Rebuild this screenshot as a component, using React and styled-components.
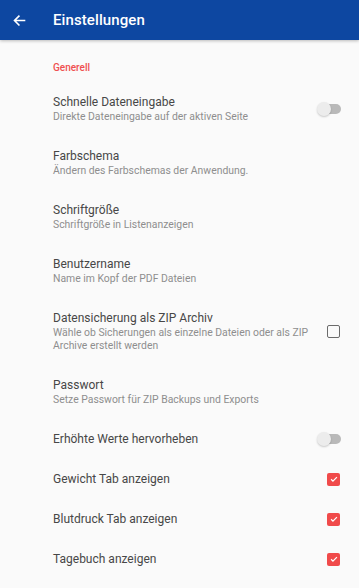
import styled, { createGlobalStyle } from 'styled-components'

const GlobalStyle = createGlobalStyle`
  html, body {
    margin: 0;
    padding: 0;
    background: #fafafa;
    font-family: Roboto, "Noto Sans", sans-serif;
  }
`

const Page = styled.div`
  width: 359px;
  min-height: 588px;
  background: #fafafa;
`

const AppBar = styled.header`
  height: 40px;
  background: #0d47a1;
  display: flex;
  align-items: center;
  box-shadow: 0 1px 3px rgba(0, 0, 0, 0.25);
  color: #fff;
`

const BackButton = styled.div`
  width: 53px;
  display: flex;
  align-items: center;
  padding-left: 12px;
  box-sizing: border-box;
  height: 100%;
`

const Title = styled.h1`
  margin: 0;
  font-size: 15px;
  font-weight: 500;
  letter-spacing: 0.1px;
`

const List = styled.div`
  padding-top: 19px;
`

const Category = styled.div`
  padding-left: 53px;
  color: #ef4f4f;
  font-size: 10px;
  font-weight: 500;
  height: 18px;
  line-height: 18px;
  margin-bottom: 5px;
`

const Row = styled.div`
  display: flex;
  align-items: center;
  padding: 0 18px 0 53px;
  min-height: ${p => (p.$tall ? '54px' : '40px')};
  box-sizing: border-box;
  ${p => p.$extra && `padding-top: ${p.$extra}px; padding-bottom: ${p.$extra}px;`}
`

const Texts = styled.div`
  flex: 1;
  display: flex;
  flex-direction: column;
  gap: 1px;
`

const ItemTitle = styled.div`
  font-size: 12px;
  color: #474747;
  line-height: 15px;
`

const ItemSub = styled.div`
  font-size: 10.4px;
  color: #8e8e8e;
  line-height: 12.5px;
`

const Control = styled.div`
  width: 26px;
  display: flex;
  justify-content: flex-end;
  align-items: center;
`

const Toggle = styled.div`
  position: relative;
  width: 24px;
  height: 14px;
  &::before {
    content: '';
    position: absolute;
    left: 4px;
    right: 0;
    top: 2px;
    height: 10px;
    border-radius: 5px;
    background: #b9b9b9;
  }
  &::after {
    content: '';
    position: absolute;
    left: 0;
    top: 0;
    width: 14px;
    height: 14px;
    border-radius: 50%;
    background: #ececec;
    box-shadow: 0 1px 2px rgba(0, 0, 0, 0.2);
  }
`

const Box = styled.div`
  width: 13px;
  height: 13px;
  box-sizing: border-box;
  border-radius: 2px;
  border: ${p => (p.$checked ? 'none' : '1.5px solid #6b6b6b')};
  background: ${p => (p.$checked ? '#f04a4a' : 'transparent')};
  display: flex;
  align-items: center;
  justify-content: center;
  margin-right: 1px;
`

const Check = ({ checked }) => (
  <Box $checked={checked}>
    {checked && (
      <svg width="10" height="10" viewBox="0 0 24 24">
        <path d="M5 12.5l4.5 4.5L19 7.5" fill="none" stroke="#fff" strokeWidth="3" />
      </svg>
    )}
  </Box>
)

const items = [
  { title: 'Schnelle Dateneingabe', sub: 'Direkte Dateneingabe auf der aktiven Seite', control: 'toggle' },
  { title: 'Farbschema', sub: 'Ändern des Farbschemas der Anwendung.' },
  { title: 'Schriftgröße', sub: 'Schriftgröße in Listenanzeigen' },
  { title: 'Benutzername', sub: 'Name im Kopf der PDF Dateien' },
  {
    title: 'Datensicherung als ZIP Archiv',
    sub: 'Wähle ob Sicherungen als einzelne Dateien oder als ZIP Archive erstellt werden',
    control: 'box',
    extra: 13,
  },
  { title: 'Passwort', sub: 'Setze Passwort für ZIP Backups und Exports' },
  { title: 'Erhöhte Werte hervorheben', control: 'toggle' },
  { title: 'Gewicht Tab anzeigen', control: 'checked' },
  { title: 'Blutdruck Tab anzeigen', control: 'checked' },
  { title: 'Tagebuch anzeigen', control: 'checked' },
]

export default function App() {
  return (
    <Page>
      <GlobalStyle />
      <AppBar>
        <BackButton>
          <svg width="15" height="15" viewBox="0 0 24 24">
            <path d="M20 12H5M11 5l-7 7 7 7" fill="none" stroke="#fff" strokeWidth="2.6" strokeLinecap="square" />
          </svg>
        </BackButton>
        <Title>Einstellungen</Title>
      </AppBar>
      <List>
        <Category>Generell</Category>
        {items.map(it => (
          <Row key={it.title} $tall={!!it.sub} $extra={it.extra}>
            <Texts>
              <ItemTitle>{it.title}</ItemTitle>
              {it.sub && <ItemSub>{it.sub}</ItemSub>}
            </Texts>
            <Control>
              {it.control === 'toggle' && <Toggle />}
              {it.control === 'box' && <Check checked={false} />}
              {it.control === 'checked' && <Check checked />}
            </Control>
          </Row>
        ))}
      </List>
    </Page>
  )
}
